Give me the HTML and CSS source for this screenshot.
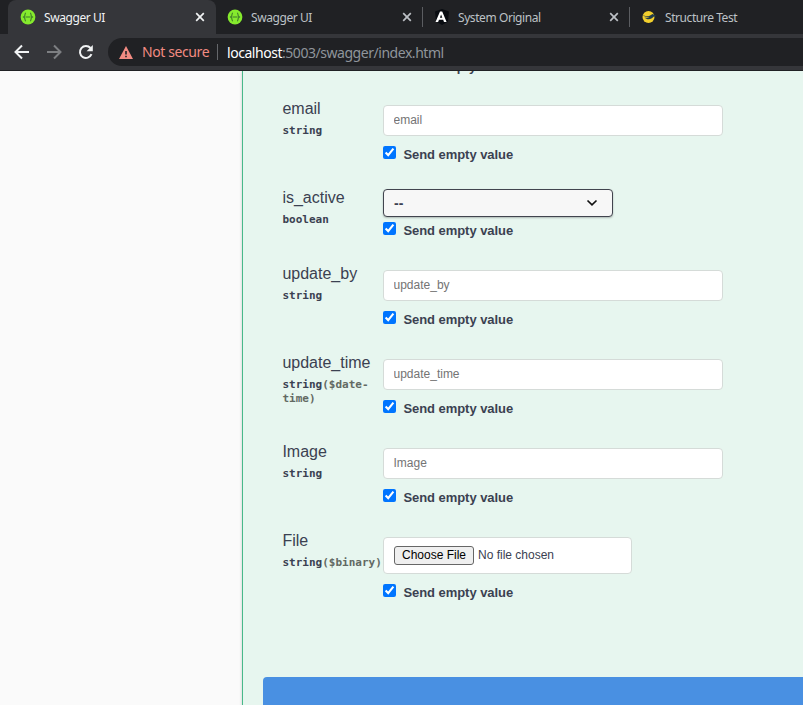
FILE: index.html
```html
<!DOCTYPE html>
<html lang="en">
<head>
<meta charset="utf-8">
<title>Swagger UI</title>
<link rel="stylesheet" href="styles.css">
</head>
<body>
<svg class="defs" width="0" height="0">
  <symbol id="swagger" viewBox="0 0 16 16"><circle cx="8" cy="8" r="7.4" fill="#85ea2d"/><path d="M6 4C4.600 4 5.200 6.200 4.600 7.200L3.500 8l1.100.8C5.200 9.800 4.600 12 6 12M10 4c1.400 0 .8 2.200 1.400 3.200l1.100.8-1.100.8C10.800 9.800 11.400 12 10 12M5.500 8h5" fill="none" stroke="#3d7a2a" stroke-width="1.100"/></symbol>
  <symbol id="close" viewBox="0 0 10 10"><path d="M1.200 1.200l7.600 7.600M8.800 1.200L1.200 8.800" fill="none" stroke="currentColor" stroke-width="1.700"/></symbol>
</svg>
<header class="browser">
  <div class="tabs">
    <div class="tab active"><svg class="favicon"><use href="#swagger"/></svg><span class="title">Swagger UI</span><svg class="close"><use href="#close"/></svg></div>
    <div class="tab"><svg class="favicon"><use href="#swagger"/></svg><span class="title">Swagger UI</span><svg class="close"><use href="#close"/></svg></div>
    <div class="tab divided"><svg class="favicon" viewBox="0 0 16 16"><path d="M8 0l7 2.500-1 10L8 16l-6-3.500L1 2.500z" fill="#080b10"/><path d="M1.500 13L6 2.500h2.200L12.600 13H10L9.200 10.800H5L4.100 13zM5.900 8.800h2.400L7.100 5.600z" fill="#fff" fill-rule="evenodd"/></svg><span class="title">System Original</span><svg class="close"><use href="#close"/></svg></div>
    <div class="tab divided"><svg class="favicon" viewBox="0 0 16 16"><circle cx="7.500" cy="8" r="6" fill="#f2cf2d"/><path d="M.8 5.200c3 2.200 5.800 2.500 7.800 1.500l3-1.700 4.200 2-3.300.8c-2 2.800-6.500 3.200-9 .6 2 .5 3.500.4 5-.3C5.500 8.200 2.500 7.500.8 5.200z" fill="#203b4b"/></svg><span class="title">Structure Test</span></div>
  </div>
  <div class="toolbar">
    <svg class="nav" viewBox="0 0 16 16"><path d="M15 8H2M8 1.500L1.500 8 8 14.500" fill="none" stroke="#f1f3f4" stroke-width="2"/></svg>
    <svg class="nav" viewBox="0 0 16 16"><path d="M1 8h13M8 1.500L14.500 8 8 14.500" fill="none" stroke="#7d7f82" stroke-width="2"/></svg>
    <svg class="nav" viewBox="0 0 16 16"><path d="M13.500 10.200A6 6 0 1 1 12.500 4" fill="none" stroke="#f1f3f4" stroke-width="2"/><path d="M14.800 1v6.200H8.600z" fill="#f1f3f4"/></svg>
    <div class="address">
      <svg class="warning" viewBox="0 0 14 13"><path d="M7 0l7 13H0z" fill="#f28b82"/><path d="M6.200 5h1.600v3.500H6.200zM6.200 9.700h1.600v1.500H6.200z" fill="#202124"/></svg>
      <span class="insecure">Not secure</span>
      <span class="url"><b>localhost</b>:5003/swagger/index.html</span>
    </div>
  </div>
</header>
<main class="page">
  <section class="operation">
    <div class="row previous"><div class="value"><label class="send"><span>Send empty value</span></label></div></div>
    <div class="row"><div class="param"><div class="name">email</div><div class="type">string</div></div><div class="value"><input class="text" type="text" placeholder="email"><label class="send"><input type="checkbox" checked><span>Send empty value</span></label></div></div>
    <div class="row short"><div class="param"><div class="name">is_active</div><div class="type">boolean</div></div><div class="value"><div class="select"><span>--</span><svg viewBox="0 0 12 8"><path d="M1.500 1.500L6 5.800l4.500-4.300" fill="none" stroke="#111" stroke-width="1.700"/></svg></div><label class="send"><input type="checkbox" checked><span>Send empty value</span></label></div></div>
    <div class="row"><div class="param"><div class="name">update_by</div><div class="type">string</div></div><div class="value"><input class="text" type="text" placeholder="update_by"><label class="send"><input type="checkbox" checked><span>Send empty value</span></label></div></div>
    <div class="row"><div class="param"><div class="name">update_time</div><div class="type">string<i>($date-<br>time)</i></div></div><div class="value"><input class="text" type="text" placeholder="update_time"><label class="send"><input type="checkbox" checked><span>Send empty value</span></label></div></div>
    <div class="row"><div class="param"><div class="name">Image</div><div class="type">string</div></div><div class="value"><input class="text" type="text" placeholder="Image"><label class="send"><input type="checkbox" checked><span>Send empty value</span></label></div></div>
    <div class="row last"><div class="param"><div class="name">File</div><div class="type">string<i>($binary)</i></div></div><div class="value"><div class="file"><button type="button">Choose File</button><span>No file chosen</span></div><label class="send"><input type="checkbox" checked><span>Send empty value</span></label></div></div>
    <div class="execute"></div>
  </section>
</main>
</body>
</html>
```
FILE: styles.css
```css
* { box-sizing: border-box; }
body { margin: 0; height: 705px; overflow: hidden; display: flex; flex-direction: column; background: #fafafa; color: #3b4151; font-family: "Liberation Sans", Arial, sans-serif; }
.defs { position: absolute; }
.browser { height: 71px; flex: none; background: #35363a; border-bottom: 1px solid #202124; font-family: "Noto Sans", sans-serif; }
.tabs { display: flex; height: 34px; padding-left: 8px; background: #202124; }
.tab { display: flex; align-items: center; width: 207px; flex: none; padding: 0 11px 0 12px; color: #bdc1c6; font-size: 12px; }
.tab.active { width: 208px; background: #35363a; border-radius: 8px 8px 0 0; color: #f1f3f4; padding-right: 11px; }
.tab.active + .tab { width: 206px; padding-left: 11px; padding-right: 10px; }
.divided { background: linear-gradient(#5b5d61, #5b5d61) 0 7px / 1px 20px no-repeat; }
.favicon { width: 16px; height: 16px; flex: none; }
.title { margin-left: 8px; flex: 1; white-space: nowrap; letter-spacing: -.42px; }
.close { width: 10px; height: 10px; }
.divided .close { margin-right: -1px; }
.toolbar { display: flex; align-items: center; height: 36px; padding-left: 14px; gap: 16px; }
.nav { width: 16px; height: 16px; flex: none; }
.address { display: flex; align-items: center; flex: 1; height: 28px; margin-left: -2px; padding-left: 11px; border-radius: 14px 0 0 14px; background: #202124; font-size: 14px; white-space: nowrap; }
.warning { width: 14px; height: 13px; }
.insecure { margin-left: 9px; width: 76px; height: 16px; line-height: 16px; border-right: 1px solid #65676b; color: #f28b82; letter-spacing: -.4px; }
.url { margin-left: 9px; color: #8f959b; letter-spacing: -.46px; }
.url b { color: #fff; font-weight: 400; }
.page { flex: 1; min-height: 0; padding-left: 242px; overflow: hidden; }
.operation { height: 660px; padding-left: 40px; border-left: 1px solid #49b98a; background: #e7f6ef; box-shadow: 0 0 3px rgba(0,0,0,.19); }
.row { display: flex; height: 89px; }
.row.short { height: 76px; }
.row.previous { height: 26px; padding-left: 100px; overflow: hidden; }
.previous .value { margin-top: -13px; padding-top: 0; }
.previous .send { margin: 0 0 0 20px; height: 17px; }
.param { width: 100px; flex: none; margin-left: -.6px; margin-right: .6px; }
.name { height: 24px; font-size: 16px; line-height: 24px; }
.type { margin-top: 3px; font: 700 11px/14px "DejaVu Sans Mono", monospace; white-space: nowrap; }
.type i { color: #626963; font-style: normal; }
.value { padding-top: 8px; }
.text { display: block; width: 340px; height: 31px; padding: 0 10px 1px 9.500px; border: 1px solid #d5dbd8; border-radius: 4px; background: #fff; font: 12px "Liberation Sans", sans-serif; }
.text::placeholder { color: #747474; }
.send { display: flex; align-items: flex-start; height: 18px; margin-top: 10px; font-size: 13px; line-height: 17px; font-weight: 700; letter-spacing: -.05px; }
.send input { width: 13px; height: 13px; margin: 0 7.400px 0 0; accent-color: #0075ff; }
.short .value { padding-top: 3px; }
.short .send { margin-top: 5px; }
.select { display: flex; align-items: center; justify-content: space-between; width: 230px; height: 28px; padding: 0 14px 0 10px; border: 1px solid #41444e; border-radius: 4px; background: #f7f7f7; box-shadow: 0 1px 2px rgba(0,0,0,.25); font-size: 14px; font-weight: 700; }
.select svg { width: 12px; height: 8px; }
.file { display: flex; align-items: center; width: 249px; height: 37px; padding: 0 10px 2px; border: 1px solid #d5dbd8; border-radius: 4px; background: #fff; font-size: 12px; }
.file button { width: 80px; height: 19px; padding: 0; margin: 1px 4px 0 0; border: 1px solid #666; border-radius: 3px; background: #efefef; color: #000; font: 12px "Liberation Sans", sans-serif; }
.row.last { height: 148px; }
.execute { height: 40px; margin-left: -20px; border-radius: 4px 0 0 0; background: #4990e2; }
```
